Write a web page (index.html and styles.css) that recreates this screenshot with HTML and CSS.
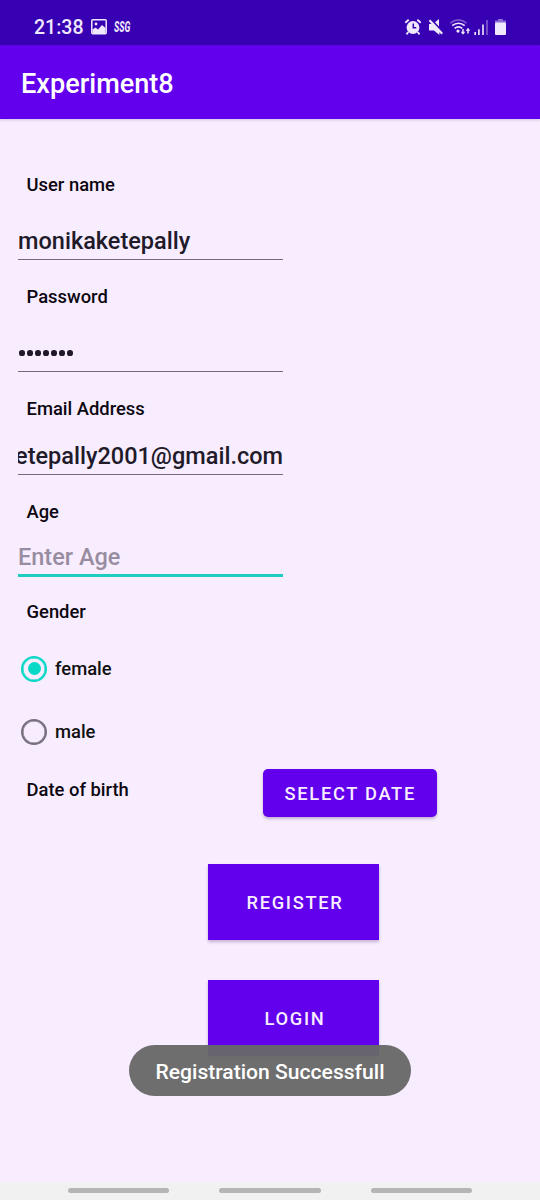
FILE: index.html
```html
<!DOCTYPE html>
<html lang="en">
<head>
<meta charset="utf-8">
<title>Experiment8</title>
<link rel="stylesheet" href="styles.css">
</head>
<body>
<div class="screen">
  <div class="status">
    <span class="clock">21:38</span>
    <svg class="icon-image" width="16" height="16" viewBox="0 0 16 16"><rect x=".8" y=".8" width="14.4" height="13.9" rx="1" fill="none" stroke="currentColor" stroke-width="1.5"/><circle cx="5" cy="5" r="1.4" fill="currentColor"/><path d="M1.5 10.5 4.5 8.5 7 10.5 11 6 14.5 9v5.3h-13z" fill="currentColor"/></svg>
    <span class="carrier">SSG</span>
    <div class="status-icons">
      <svg width="104" height="18" viewBox="0 0 104 18" fill="none" stroke="currentColor">
        <circle cx="9" cy="9.500" r="6.400" fill="currentColor" stroke="none"/>
        <path d="M1.300 4.700 4.700 1.700M13.300 1.700l3.400 3M4.300 14l-1.800 2.300M13.700 14l1.800 2.300" stroke-width="1.900"/>
        <path d="M9.300 5.500v4.300h3" stroke="#3700b3" stroke-width="1.500"/>
        <path d="M25 6h3.400l2 2.100 5 5v4L30 12.500h-5z" fill="currentColor" stroke="none"/>
        <path d="M31 4.200 35 1v7.500z" fill="currentColor" stroke="none"/>
        <path d="m25.500 2.200 12.700 13.600" stroke-width="2.200"/>
        <path d="M46.300 5.200c5-4.300 11.300-4.300 16.200 0" stroke-width="1.500" opacity=".4"/>
        <path d="M48.200 7.700c3.800-3.200 8.700-3.200 12.500 0M50.600 10.400c2.400-2 5.300-2 7.700 0" stroke-width="1.700"/>
        <circle cx="54" cy="13.100" r="1.600" fill="currentColor" stroke="none"/>
        <path d="M59 11v4M64 15.500v-4" stroke-width="1.500"/>
        <path d="m56.700 13.700 2.300 3 2.300-3zM61.700 12.800l2.300-3 2.300 3z" fill="currentColor" stroke="none"/>
        <path d="M71.200 14v3M74.900 11.200V17M79 6.500V17" stroke-width="1.600"/>
        <path d="M83 2v15" stroke-width="1.600" opacity=".4"/>
        <path d="M94 1h5v1.500h3V5H91V2.500h3z" fill="currentColor" stroke="none" opacity=".45"/>
        <rect x="91" y="4.500" width="11" height="12.500" rx="1" fill="currentColor" stroke="none"/>
      </svg>
    </div>
  </div>
  <header class="appbar">Experiment8</header>
  <main class="form">
    <label class="label">User name</label>
    <div class="field field-tall"><span>monikaketepally</span></div>
    <label class="label">Password</label>
    <div class="field field-tall"><div class="dots"><i></i><i></i><i></i><i></i><i></i><i></i><i></i></div></div>
    <label class="label">Email Address</label>
    <div class="field field-email"><span>etepally2001@gmail.com</span></div>
    <label class="label">Age</label>
    <div class="field field-active"><span>Enter Age</span></div>
    <label class="label">Gender</label>
    <div class="radios">
      <div class="radio"><span class="ring ring-on"></span><span>female</span></div>
      <div class="radio"><span class="ring"></span><span>male</span></div>
    </div>
    <div class="birth">
      <label class="label">Date of birth</label>
      <button class="button button-date">SELECT DATE</button>
    </div>
    <button class="button button-big">REGISTER</button>
    <button class="button button-big">LOGIN</button>
  </main>
  <div class="toast">Registration Successfull</div>
  <nav class="nav"><span></span><span></span><span></span></nav>
</div>
</body>
</html>
```
FILE: styles.css
```css
* { box-sizing: border-box; }
body { margin: 0; font-family: Roboto, sans-serif; font-weight: 500; background: #f8edff; }
.screen { position: relative; display: flex; flex-direction: column; width: 540px; height: 1200px; overflow: hidden; }
.status { display: flex; align-items: center; height: 45px; padding: 9px 32px 0 34px; background: #3700b3; color: #f0e8fc; }
.clock { padding-top: 2px; font-size: 19.500px; line-height: 24px; }
.icon-image { margin-left: 8px; }
.carrier { margin-left: 7px; font-size: 14px; font-weight: 800; font-style: italic; transform: scaleX(.62); transform-origin: left; }
.status-icons { margin-left: auto; height: 18px; }
.status-icons svg { display: block; overflow: visible; }
.appbar { height: 74px; padding: 1px 21px 0; line-height: 76px; font-size: 27.100px; color: #fff; background: #6200ee; box-shadow: 0 1px 3px rgba(60, 0, 90, .2); }
.form { flex: 1; display: flex; flex-direction: column; align-items: flex-start; padding: 54px 18px 0; color: #111; }
.label { height: 24px; margin-left: 8.500px; font-size: 18.400px; line-height: 24px; white-space: nowrap; color: #0c0710; }
.field { display: flex; align-items: flex-end; width: 265px; padding-bottom: 4px; border-bottom: 1px solid #75697c; font-size: 23.500px; line-height: 28px; color: #211a29; overflow: hidden; white-space: nowrap; }
.field-tall { height: 63px; margin-bottom: 25px; }
.field-email { height: 54px; margin-bottom: 25px; justify-content: flex-end; }
.field-active { height: 53px; margin-bottom: 23px; padding-bottom: 3px; border-bottom: 3px solid #1dcdc0; color: #988da0; }
.dots { display: flex; gap: 2.300px; padding: 0 1px 11px; }
.dots i { width: 5.700px; height: 5.700px; border-radius: 50%; background: #211a29; }
.radios { display: flex; flex-direction: column; padding: 13px 0 0 3px; }
.radio { display: flex; align-items: center; gap: 8px; height: 63px; font-size: 18.400px; }
.ring { display: flex; align-items: center; justify-content: center; width: 26px; height: 26px; border: 2px solid #79707e; box-shadow: inset 0 0 0 .5px #79707e; border-radius: 50%; }
.ring-on { border-color: #08d8c6; box-shadow: inset 0 0 0 .5px #08d8c6; }
.ring-on::after { content: ""; width: 13px; height: 13px; border-radius: 50%; background: #08d8c6; }
.birth { display: flex; width: 419px; justify-content: space-between; margin-top: 6px; }
.birth .label { margin-top: 9px; }
.button { border: 0; padding: 1px 0 0 1px; font: 500 18.300px Roboto, sans-serif; letter-spacing: 1.700px; color: #f8edff; background: #6200ee; box-shadow: 0 2px 3px rgba(40, 0, 80, .25); }
.button-date { width: 174.500px; height: 48px; border-radius: 5px; }
.button-big { width: 171px; height: 76px; padding-left: 3px; margin: 47px 0 0 190px; }
.button-big + .button-big { margin-top: 40px; }
.toast { position: absolute; left: 129px; top: 1045px; width: 282px; height: 51px; border-radius: 26px; line-height: 53px; text-align: center; font-size: 21.100px; color: #fff; background: rgba(104, 104, 104, .96); }
.nav { display: flex; justify-content: center; gap: 50px; height: 18px; padding-top: 6px; background: #f1f1f1; }
.nav span { width: 101.500px; height: 5px; border-radius: 3px; background: #b5b5b5; }
```
